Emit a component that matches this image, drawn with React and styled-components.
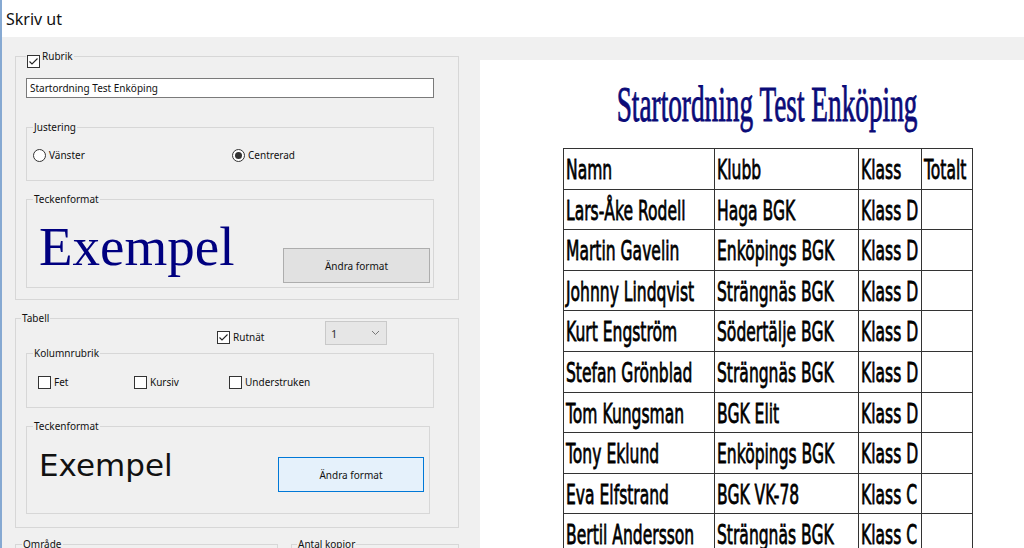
import React from "react";
import styled, { createGlobalStyle } from "styled-components";

const GlobalStyle = createGlobalStyle`
  html, body {
    margin: 0;
    padding: 0;
    background: #f0f0f0;
  }
  body {
    font-family: "Noto Sans", "Liberation Sans", sans-serif;
    color: #111;
  }
`;

const Window = styled.div`
  width: 1024px;
  height: 548px;
  box-sizing: border-box;
  overflow: hidden;
  border-left: 2px solid #86a9d2;
  display: flex;
  flex-direction: column;
  background: #f0f0f0;
`;

const TitleBar = styled.div`
  height: 37px;
  flex: none;
  background: #fff;
  display: flex;
  align-items: center;
  padding-left: 4px;
  font-size: 16px;
  color: #111;
`;

const Body = styled.div`
  flex: 1;
  min-height: 0;
  display: flex;
`;

const LeftPane = styled.div`
  flex: none;
  width: 444px;
  padding: 13px 0 0 13px;
  display: flex;
  flex-direction: column;
`;

const Group = styled.fieldset`
  box-sizing: border-box;
  min-width: 0;
  width: ${(p) => p.$w}px;
  margin: ${(p) => p.$mt || 0}px 0 0 0;
  padding: ${(p) => p.$pad};
  border: 1px solid #d7d7d7;
  flex: none;
`;

const Legend = styled.legend`
  display: flex;
  align-items: flex-start;
  padding: 0 1px;
  margin-left: ${(p) => p.$ml || 0}px;
  font-size: 10px;
  line-height: 12px;
  color: #111;
`;

const Row = styled.div`
  display: flex;
  align-items: flex-start;
  justify-content: ${(p) => p.$justify || "flex-start"};
  margin-top: ${(p) => p.$mt || 0}px;
  padding-left: ${(p) => p.$pl || 0}px;
`;

const TextField = styled.div`
  box-sizing: border-box;
  width: 408px;
  height: 20px;
  border: 1px solid #7a7a7a;
  background: #fff;
  padding-left: 3px;
  font-size: 10px;
  line-height: 18px;
  color: #111;
`;

const Option = styled.label`
  display: flex;
  align-items: center;
  width: ${(p) => (p.$w ? `${p.$w}px` : "auto")};
  margin-top: ${(p) => p.$mt || 0}px;
  font-size: 10px;
  line-height: 13px;
  color: #111;
  gap: 3px;
`;

const Box = styled.span`
  box-sizing: border-box;
  width: 13px;
  height: 13px;
  flex: none;
  border: 1px solid #333;
  background: #fff;
  display: flex;
  align-items: center;
  justify-content: center;
  margin-top: ${(p) => p.$mt || 0}px;
  margin-bottom: ${(p) => p.$mb || 0}px;
`;

const RadioRing = styled.span`
  box-sizing: border-box;
  width: 13px;
  height: 13px;
  flex: none;
  border: 1px solid #333;
  border-radius: 50%;
  background: #fff;
  display: flex;
  align-items: center;
  justify-content: center;
`;

const RadioDot = styled.span`
  width: 7px;
  height: 7px;
  border-radius: 50%;
  background: #333;
`;

const Button = styled.div`
  box-sizing: border-box;
  width: ${(p) => p.$w}px;
  height: 35px;
  margin-top: ${(p) => p.$mt || 0}px;
  border: 1px solid ${(p) => (p.$focused ? "#0078d7" : "#adadad")};
  background: ${(p) => (p.$focused ? "#e5f1fb" : "#e1e1e1")};
  display: flex;
  align-items: center;
  justify-content: center;
  font-size: 10px;
  color: #111;
  flex: none;
`;

const SerifSample = styled.div`
  margin: 14px 0 0 6px;
  font-family: "Liberation Serif", "Times New Roman", serif;
  font-size: 55px;
  line-height: 56px;
  color: #000080;
`;

const SansSample = styled.div`
  margin: 18px 0 0 6px;
  font-family: "DejaVu Sans", Verdana, sans-serif;
  font-size: 31px;
  line-height: 31px;
  color: #111;
`;

const Select = styled.div`
  box-sizing: border-box;
  width: 62px;
  height: 24px;
  border: 1px solid #c9c9c9;
  background: #e6e6e6;
  display: flex;
  align-items: center;
  justify-content: space-between;
  padding: 0 6px 0 5px;
  font-size: 11px;
  color: #333;
`;

const OptionsGrid = styled.div`
  display: grid;
  grid-template-columns: 108px auto;
  align-items: start;
  margin-top: -3px;
  padding-left: 191px;
`;

const BottomRow = styled.div`
  display: flex;
  gap: 13px;
  margin-top: 10px;
`;

const Preview = styled.div`
  flex: 1;
  margin: 23px 0 0 21px;
  background: #fff;
  padding: 19px 0 0 83px;
`;

const TitleLine = styled.div`
  width: 409px;
  height: 51px;
  display: flex;
  justify-content: center;
`;

const SheetTitle = styled.span`
  display: inline-block;
  flex: none;
  font-family: "Liberation Serif", "Times New Roman", serif;
  font-size: 51px;
  line-height: 51px;
  color: #0b0b78;
  white-space: nowrap;
  -webkit-text-stroke: 0.9px #0b0b78;
  transform: scaleX(0.535);
  transform-origin: 50% 0;
`;

const Sheet = styled.div`
  margin-top: 18px;
  width: max-content;
  display: grid;
  grid-template-columns: 151px 144px 63px 51px;
  grid-auto-rows: 40.6px;
  border-top: 1px solid #333;
  border-left: 1px solid #333;
`;

const Cell = styled.div`
  box-sizing: border-box;
  overflow: hidden;
  border-right: 1px solid #333;
  border-bottom: 1px solid #333;
  padding: 7px 0 0 2px;
`;

const CellText = styled.span`
  display: inline-block;
  font-family: "DejaVu Sans", Verdana, sans-serif;
  font-size: 27px;
  line-height: 27px;
  color: #000;
  white-space: nowrap;
  -webkit-text-stroke: 0.8px #000;
  transform: scaleX(0.576);
  transform-origin: 0 0;
`;

const Check = ({ checked, mt, mb }) => (
  <Box $mt={mt} $mb={mb}>
    {checked && (
      <svg width="11" height="11" viewBox="0 0 11 11">
        <polyline points="1.5,5.5 4,8 9.5,2.5" fill="none" stroke="#222" strokeWidth="1.1" />
      </svg>
    )}
  </Box>
);

const Radio = ({ checked }) => <RadioRing>{checked && <RadioDot />}</RadioRing>;

const Chevron = () => (
  <svg width="9" height="6" viewBox="0 0 9 6">
    <polyline points="1,1 4.5,4.5 8,1" fill="none" stroke="#777" strokeWidth="1" />
  </svg>
);

const header = ["Namn", "Klubb", "Klass", "Totalt"];

const rows = [
  ["Lars-Åke Rodell", "Haga BGK", "Klass D"],
  ["Martin Gavelin", "Enköpings BGK", "Klass D"],
  ["Johnny Lindqvist", "Strängnäs BGK", "Klass D"],
  ["Kurt Engström", "Södertälje BGK", "Klass D"],
  ["Stefan Grönblad", "Strängnäs BGK", "Klass D"],
  ["Tom Kungsman", "BGK Elit", "Klass D"],
  ["Tony Eklund", "Enköpings BGK", "Klass D"],
  ["Eva Elfstrand", "BGK VK-78", "Klass C"],
  ["Bertil Andersson", "Strängnäs BGK", "Klass C"],
];

export default function App() {
  return (
    <>
      <GlobalStyle />
      <Window>
        <TitleBar>Skriv ut</TitleBar>
        <Body>
          <LeftPane>
            <Group $w={444} $pad="16px 0 11px 10px">
              <Legend>
                <Check checked mt={5} mb={-6} />
                <span style={{ marginLeft: 2 }}>Rubrik</span>
              </Legend>
              <TextField>Startordning Test Enköping</TextField>

              <Group $w={408} $mt={23} $pad="16px 0 18px 6px">
                <Legend>Justering</Legend>
                <Row>
                  <Option $w={199}>
                    <Radio />
                    Vänster
                  </Option>
                  <Option>
                    <Radio checked />
                    Centrerad
                  </Option>
                </Row>
              </Group>

              <Group $w={408} $mt={12} $pad="0 3px 4px 6px">
                <Legend>Teckenformat</Legend>
                <Row $justify="space-between">
                  <SerifSample>Exempel</SerifSample>
                  <Button $w={147} $mt={43}>Ändra format</Button>
                </Row>
              </Group>
            </Group>

            <Group $w={444} $mt={12} $pad="0 0 13px 10px">
              <Legend $ml={-5}>Tabell</Legend>
              <OptionsGrid>
                <Option $mt={10}>
                  <Check checked />
                  Rutnät
                </Option>
                <Select>
                  <span>1</span>
                  <Chevron />
                </Select>
              </OptionsGrid>

              <Group $w={408} $mt={2} $pad="17px 0 18px 6px">
                <Legend>Kolumnrubrik</Legend>
                <Row $pl={5}>
                  <Option $w={96}>
                    <Check />
                    Fet
                  </Option>
                  <Option $w={95}>
                    <Check />
                    Kursiv
                  </Option>
                  <Option>
                    <Check />
                    Understruken
                  </Option>
                </Row>
              </Group>

              <Group $w={404} $mt={12} $pad="0 5px 21px 6px">
                <Legend>Teckenformat</Legend>
                <Row $justify="space-between">
                  <SansSample>Exempel</SansSample>
                  <Button $w={146} $mt={25} $focused>Ändra format</Button>
                </Row>
              </Group>
            </Group>

            <BottomRow>
              <Group $w={263} $pad="0 0 40px 6px">
                <Legend>Område</Legend>
              </Group>
              <Group $w={168} $pad="0 0 40px 5px">
                <Legend>Antal kopior</Legend>
              </Group>
            </BottomRow>
          </LeftPane>

          <Preview>
            <TitleLine>
              <SheetTitle>Startordning Test Enköping</SheetTitle>
            </TitleLine>
            <Sheet>
              {header.map((h) => (
                <Cell key={h}>
                  <CellText>{h}</CellText>
                </Cell>
              ))}
              {rows.map((r, i) => (
                <React.Fragment key={i}>
                  {r.map((c, j) => (
                    <Cell key={j}>
                      <CellText>{c}</CellText>
                    </Cell>
                  ))}
                  <Cell />
                </React.Fragment>
              ))}
            </Sheet>
          </Preview>
        </Body>
      </Window>
    </>
  );
}
